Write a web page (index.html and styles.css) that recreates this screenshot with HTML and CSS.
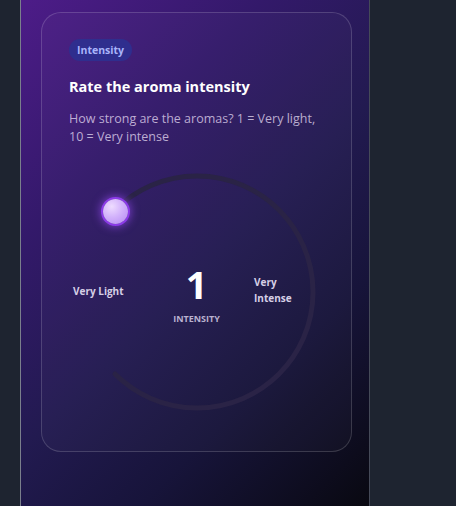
FILE: index.html
```html
<!DOCTYPE html>
<html lang="en">
<head>
<meta charset="utf-8">
<title>Rate the aroma intensity</title>
<link rel="stylesheet" href="styles.css">
</head>
<body>
<div class="phone">
  <section class="card">
    <span class="badge">Intensity</span>
    <h1 class="title">Rate the aroma intensity</h1>
    <p class="desc">How strong are the aromas? 1 = Very light, 10 = Very intense</p>
    <div class="dial">
      <svg class="track" width="240" height="240" viewBox="0 0 240 240">
        <path d="M 37.98 37.98 A 116 116 0 1 1 37.98 202.02" fill="none" stroke="#2a2346" stroke-width="5" stroke-linecap="round"/>
      </svg>
      <div class="knob"></div>
      <span class="lbl lbl-left">Very Light</span>
      <div class="center">
        <span class="value">1</span>
        <span class="unit">INTENSITY</span>
      </div>
      <span class="lbl lbl-right">Very<br>Intense</span>
    </div>
  </section>
</div>
</body>
</html>
```
FILE: styles.css
```css
* { box-sizing: border-box; }
html, body { margin: 0; padding: 0; }
body {
  background: #1e2430;
  font-family: "Open Sans", "Noto Sans", sans-serif;
  height: 506px;
  overflow: hidden;
}
.phone {
  margin-left: 20px;
  width: 350px;
  height: 520px;
  border-left: 1px solid #7a7f8c;
  border-right: 1px solid #454a58;
  background: linear-gradient(135deg, #4d1c88 0%, #33196a 28%, #221a50 52%, #17143a 72%, #08080e 100%);
  padding: 12px 16px 0 20px;
}
.card {
  width: 311px;
  height: 440px;
  border: 1px solid rgba(255,255,255,0.16);
  border-radius: 20px;
  background: rgba(255,255,255,0.025);
  padding: 26px 27px;
  display: flex;
  flex-direction: column;
  align-items: flex-start;
}
.badge {
  display: inline-block;
  height: 22px;
  line-height: 22px;
  padding: 0 8px;
  border-radius: 11px;
  background: #2f2e8e;
  color: #a9b4fb;
  font-size: 10.5px;
  font-weight: 700;
}
.title {
  margin: 16px 0 0;
  font-size: 14.5px;
  line-height: 20px;
  font-weight: 700;
  color: #ffffff;
}
.desc {
  margin: 13px 0 0;
  font-size: 12.5px;
  line-height: 18px;
  color: rgba(225,215,240,0.78);
}
.dial {
  position: relative;
  width: 255px;
  height: 240px;
  margin-top: 26px;
}
.track {
  position: absolute;
  left: 7.5px;
  top: 0;
}
.knob {
  position: absolute;
  left: 34px;
  top: 27px;
  width: 25px;
  height: 25px;
  border-radius: 50%;
  background: radial-gradient(circle at 35% 30%, #eedcff 0%, #d2b2fb 45%, #b387f2 100%);
  box-shadow: 0 0 0 2px #8c3be8, 0 0 8px 3px rgba(160, 80, 255, 0.6);
}
.lbl {
  position: absolute;
  font-size: 10px;
  font-weight: 700;
  line-height: 16px;
  color: #d6cfe6;
}
.lbl-left { left: 4px; top: 111px; }
.lbl-right { left: 185px; top: 102px; }
.center {
  position: absolute;
  left: 0;
  right: 0;
  top: 92px;
  display: flex;
  flex-direction: column;
  align-items: center;
}
.value {
  font-size: 38px;
  line-height: 40px;
  font-weight: 700;
  color: #ffffff;
}
.unit {
  margin-top: 9px;
  font-size: 9px;
  line-height: 12px;
  font-weight: 700;
  color: #b9b1cf;
}
```
